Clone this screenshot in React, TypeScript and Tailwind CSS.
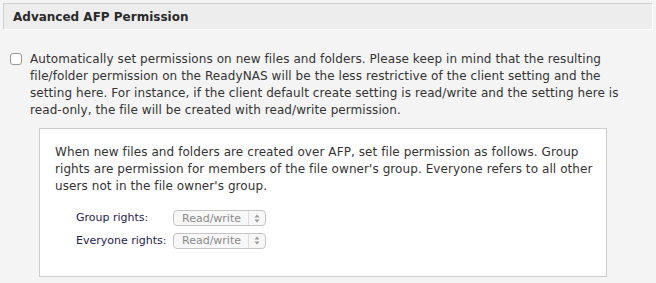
import React from "react";

function Select() {
  return (
    <div className="flex h-[16px] w-[93px] items-center rounded-[4px] border border-[#c4c4c4] bg-[#f7f7f7] text-[11px] text-[#8a8a8a]">
      <span className="flex-1 pl-[8px] leading-none">Read/write</span>
      <span className="flex h-full w-[17px] items-center justify-center border-l border-[#dedede]">
        <svg width="6" height="9" viewBox="0 0 6 9">
          <path d="M3 0.5 L5.5 3.5 H0.5 Z" fill="#9a9a9a" />
          <path d="M3 8.5 L5.5 5.5 H0.5 Z" fill="#9a9a9a" />
        </svg>
      </span>
    </div>
  );
}

export default function App() {
  return (
    <div
      className="h-[283px] w-[656px] overflow-hidden bg-[#f4f4f4] text-[#333]"
      style={{ fontFamily: '"DejaVu Sans", Verdana, sans-serif' }}
    >
      <div className="pl-[3px] pr-[3px] pt-[3px]">
        <div className="flex h-[27px] items-center border-l border-t border-b border-r border-l-[#d0d0d0] border-t-[#d0d0d0] border-b-white border-r-white bg-[#ededed] pl-[9px] text-[12px] font-bold text-[#2a2a2a]">
          Advanced AFP Permission
        </div>
      </div>
      <div className="flex pl-[10px] pt-[21px]">
        <div className="mt-[2px] h-[12px] w-[12px] shrink-0 rounded-[3px] border border-[#9a9a9a] bg-white" />
        <p className="ml-[8px] whitespace-nowrap text-[12px] leading-[17px] tracking-[0.08px] text-[#333]">
          Automatically set permissions on new files and folders. Please keep in mind that the resulting
          <br />
          file/folder permission on the ReadyNAS will be the less restrictive of the client setting and the
          <br />
          setting here. For instance, if the client default create setting is read/write and the setting here is
          <br />
          read-only, the file will be created with read/write permission.
        </p>
      </div>
      <div className="ml-[39px] mt-[9px] h-[149px] w-[568px] border border-[#cccccc] bg-white pl-[15px] pt-[15px]">
        <p className="whitespace-nowrap text-[12px] leading-[17px] tracking-[0.08px] text-[#333]">
          When new files and folders are created over AFP, set file permission as follows. Group
          <br />
          rights are permission for members of the file owner's group. Everyone refers to all other
          <br />
          users not in the file owner's group.
        </p>
        <div className="ml-[21px] mt-[15px] grid grid-cols-[97px_auto] items-center gap-y-[6px] text-[11px] text-[#1f2250]">
          <span>Group rights:</span>
          <Select />
          <span>Everyone rights:</span>
          <Select />
        </div>
      </div>
    </div>
  );
}
